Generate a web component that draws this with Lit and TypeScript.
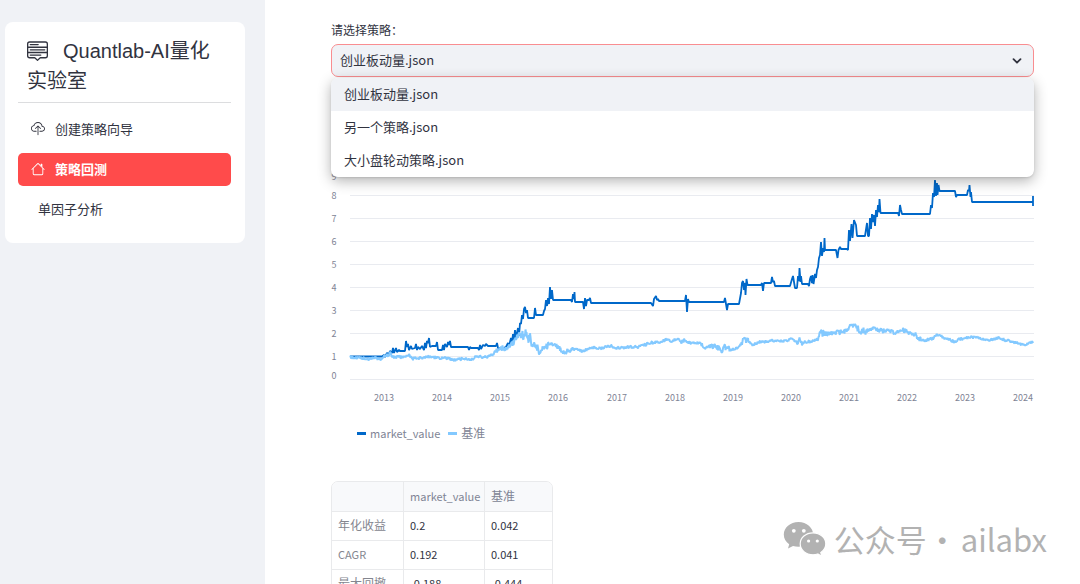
import { LitElement, html, svg, css, nothing } from "lit";
import { customElement, property, state } from "lit/decorators.js";
import { classMap } from "lit/directives/class-map.js";

const menuUpIcon = svg`<path d="M7.646 15.854a.5.5 0 0 0 .708 0L10.207 14H14a2 2 0 0 0 2-2V3a2 2 0 0 0-2-2H2a2 2 0 0 0-2 2v9a2 2 0 0 0 2 2h3.793l1.853 1.854zM1 9V6h14v3H1zm14 1v2a1 1 0 0 1-1 1h-3.793a1 1 0 0 0-.707.293l-1.5 1.5-1.5-1.5A1 1 0 0 0 5.793 13H2a1 1 0 0 1-1-1v-2h14zm0-5H1V3a1 1 0 0 1 1-1h12a1 1 0 0 1 1 1v2zM2 11.5a.5.5 0 0 0 .5.5h8a.5.5 0 0 0 0-1h-8a.5.5 0 0 0-.5.5zm0-4a.5.5 0 0 0 .5.5h11a.5.5 0 0 0 0-1h-11a.5.5 0 0 0-.5.5zm0-4a.5.5 0 0 0 .5.5h6a.5.5 0 0 0 0-1h-6a.5.5 0 0 0-.5.5z"/>`;
const cloudIcon = svg`<path d="M4.406 1.342A5.53 5.53 0 0 1 8 0c2.69 0 4.923 2 5.166 4.579C14.758 4.804 16 6.137 16 7.773 16 9.569 14.502 11 12.687 11H10a.5.5 0 0 1 0-1h2.688C13.979 10 15 8.988 15 7.773c0-1.216-1.02-2.228-2.313-2.228h-.5v-.5C12.188 2.825 10.328 1 8 1a4.53 4.53 0 0 0-2.941 1.1c-.757.652-1.153 1.438-1.153 2.055v.448l-.445.049C2.064 4.805 1 5.952 1 7.318 1 8.785 2.23 10 3.781 10H6a.5.5 0 0 1 0 1H3.781C1.708 11 0 9.366 0 7.318c0-1.763 1.266-3.223 2.942-3.593.143-.863.698-1.723 1.464-2.383z"/><path d="M7.646 4.146a.5.5 0 0 1 .708 0l3 3a.5.5 0 0 1-.708.708L8.5 5.707V14.5a.5.5 0 0 1-1 0V5.707L5.354 7.854a.5.5 0 1 1-.708-.708l3-3z"/>`;
const houseIcon = svg`<path d="M2 13.5V7h1v6.5a.5.5 0 0 0 .5.5h9a.5.5 0 0 0 .5-.5V7h1v6.5a1.5 1.5 0 0 1-1.5 1.5h-9A1.5 1.5 0 0 1 2 13.5zm11-11V6l-2-2V2.5a.5.5 0 0 1 .5-.5h1a.5.5 0 0 1 .5.5z"/><path d="M7.293 1.5a1 1 0 0 1 1.414 0l6.647 6.646a.5.5 0 0 1-.708.708L8 2.207 1.354 8.854a.5.5 0 1 1-.708-.708L7.293 1.5z"/>`;

const FONT = css`"Noto Sans CJK SC", "Noto Sans", sans-serif`;

@customElement("side-nav")
class SideNav extends LitElement {
  @state() active = 1;

  private items = [
    { label: "创建策略向导", icon: cloudIcon },
    { label: "策略回测", icon: houseIcon },
    { label: "单因子分析", icon: null },
  ];

  static styles = css`
    :host {
      display: block;
      background: #fff;
      border-radius: 8px;
      padding: 13px 14px 17px 13px;
      color: #31333f;
    }
    .title {
      margin: 0;
      padding: 1px 9px 6px;
      border-bottom: 1px solid #dcdddf;
      font: 400 20px/30px "Liberation Sans", ${FONT};
    }
    .title-icon {
      width: 21px;
      height: 21px;
      margin-right: 15px;
      vertical-align: -3px;
      fill: currentColor;
    }
    .list {
      list-style: none;
      margin: 10px 0 0;
      padding: 0;
      display: grid;
      gap: 7px;
    }
    .link {
      display: flex;
      align-items: center;
      gap: 10px;
      box-sizing: border-box;
      height: 33px;
      padding: 0 13px 2px;
      border-radius: 5px;
      color: inherit;
      text-decoration: none;
      font: 400 13px/20px ${FONT};
    }
    .plain {
      padding-left: 20px;
    }
    .active {
      background: #ff4b4b;
      color: #fff;
      font-weight: 700;
    }
    .icon {
      width: 14px;
      height: 14px;
      fill: currentColor;
    }
  `;

  render() {
    return html`
      <h1 class="title"><svg class="title-icon" viewBox="0 0 16 16" aria-hidden="true">${menuUpIcon}</svg>Quantlab-AI量化实验室</h1>
      <ul class="list">
        ${this.items.map(
          (item, i) => html`<li>
            <a
              href="#"
              class=${classMap({ link: true, active: i === this.active, plain: !item.icon })}
              @click=${(e: Event) => {
                e.preventDefault();
                this.active = i;
              }}
            >${item.icon
              ? html`<svg class="icon" viewBox="0 0 16 16" aria-hidden="true">${item.icon}</svg>`
              : nothing}${item.label}</a>
          </li>`
        )}
      </ul>
    `;
  }
}

@customElement("strategy-picker")
class StrategyPicker extends LitElement {
  @state() open = true;
  @state() value = "创业板动量.json";

  private options = ["创业板动量.json", "另一个策略.json", "大小盘轮动策略.json"];

  static styles = css`
    :host {
      display: block;
      color: #31333f;
    }
    .label {
      display: block;
      font: 400 12px/20px ${FONT};
      margin-bottom: 4px;
    }
    .box {
      position: relative;
    }
    .select {
      display: block;
      appearance: none;
      box-sizing: border-box;
      width: 100%;
      height: 33px;
      padding: 0 8px 2px;
      border: 1px solid #f98d90;
      border-radius: 7px;
      background: #f0f2f6;
      color: inherit;
      outline: none;
      font: 400 13px/20px ${FONT};
    }
    .chevron {
      position: absolute;
      right: 12px;
      top: 12px;
      width: 10px;
      height: 10px;
      fill: none;
      stroke: #31333f;
      stroke-width: 1.8;
      stroke-linecap: round;
      stroke-linejoin: round;
      pointer-events: none;
    }
    .menu {
      position: absolute;
      z-index: 2;
      top: 100%;
      left: 0;
      right: 0;
      margin: 1px 0 0;
      border-radius: 7px;
      overflow: hidden;
      background: #fff;
      box-shadow: 0 4px 14px rgba(0, 0, 0, 0.3), 0 1px 2px rgba(0, 0, 0, 0.1);
    }
    .option {
      display: block;
      width: 100%;
      height: 33px;
      border: 0;
      padding: 0 13px 2px;
      background: none;
      color: inherit;
      text-align: left;
      font: 400 13px/20px ${FONT};
    }
    .chosen {
      background: #f0f2f6;
    }
  `;

  private pick(value: string) {
    this.value = value;
    this.open = false;
  }

  render() {
    return html`
      <label class="label" for="strategy">请选择策略：</label>
      <div class="box">
        <select
          id="strategy"
          class="select"
          @mousedown=${(e: Event) => {
            e.preventDefault();
            this.open = !this.open;
          }}
          @change=${(e: Event) => this.pick((e.target as HTMLSelectElement).value)}
        >
          ${this.options.map((o) => html`<option value=${o} ?selected=${o === this.value}>${o}</option>`)}
        </select>
        <svg class="chevron" viewBox="0 0 10 10" aria-hidden="true"><path d="M1.500 3.200 5 6.700 8.500 3.200" /></svg>
        ${this.open
          ? html`<div class="menu" role="listbox" aria-label="策略">
              ${this.options.map(
                (o) => html`<button
                  type="button"
                  role="option"
                  aria-selected=${o === this.value}
                  class=${classMap({ option: true, chosen: o === this.value })}
                  @click=${() => this.pick(o)}
                >${o}</button>`
              )}
            </div>`
          : nothing}
      </div>
    `;
  }
}

/* Portfolio curve, in plot units: flat while in cash, jagged while invested. */
const MARKET = `350,356.500 382,356.500 384,355 385,357 387,353 389,354 390,351 392,353 393,348 394,353 396,348 397,352 399,350 400,351 405,351 406,341 407,347 408,344 409,350 411,346 412,349 415,348 416,344 417,350 418,347 420,349 422,346 424,350 425,343 426,348 427,341 428,343 429,338 430,347 432,346 436,346 437,342 438,350 442,350 443,345 444,350 445,344 447,347 448,342 449,345 450,341 451,347 468,347 469,350 470,347 471,348 478,348 479,350 480,345 481,349 483,345 485,346 486,344 488,346 496,346 497,343 498,348 503,348 506,347 508,343 509,346 511,338 512,343 513,334 514,340 515,330 516,338 518,328 519,336 520,323 521,324 522,315 523,319 524,309 525,307 526,313 527,310 528,318 534,318 535,308 536,315 543,315 544,311 545,309 546,300 547,306 548,298 549,304 550,287 551,299 552,290 553,300 571,300 572,302 573,294 574,299 574.500,292 575,302 583,302 584,309 585,298 586,306 587,300 589,300 590,298 591,303 651,303 653,306 654,299 656,296 657,300 658,299 659,301 685,301 686,295 687,312 688,299 689,302 724,302 725,298 726,304 727,310 728,304 739,304 741,293 742,283 743,281 744,290 745,283 745.500,295 746.500,279 747.500,285 761,285 762,283 763,291 764,283 771,283 772,277 773,282 774,281 775,286 790,286 792,279 793,276 794,282 795,288 797,288 798,276 799,281 799.500,268 800.500,282 801,276 802,284 808,284 809,286 810,279 811,276 812,283 812.500,275 813.500,284 815,274 816,278 817,270 818,267 819,258 820,255 821,242 822,256 823,248 824,252 824.500,238 825,250 836,250 837.500,258 838.500,250 840,247 841,249 847,249 848,250 849,230 850,241 851.500,224 852.500,238 854,220 856,225 857,236 865,236 867,223 868,236 869,236 870,218 871,229 872,214 873,222 874,215 875,226 876,210 877,217 878,205 879,212 879.500,199 880.500,213 898,213 899,216 900,205 901,210 902,214 930,214 931,205 932,208 933,193 934,197 935,180 936,196 937,183 937.500,195 938.500,185 939.500,191 955,191 956,197 957,195 967,195 968,190 969,191 969.500,185 970.500,197 971,192 972,202 1033,202 1033,196 1033,206`;

/* Benchmark trend: x, y and the daily jitter around it. */
const BENCHMARK: [number, number, number][] = [
  [350, 357, 1], [358, 358, 1], [370, 359, 1], [375, 358, 1], [380, 360, 1], [385, 356, 1], [390, 354, 2], [394, 357, 1],
  [405, 357, 1], [409, 355, 1], [412, 359, 1], [420, 358, 1], [428, 357, 1], [440, 358, 1], [448, 358, 1], [454, 360, 1],
  [460, 359, 1], [472, 359, 1], [477, 357, 1], [487, 357, 1], [494, 354, 1], [496, 350, 3], [500, 347, 3], [504, 348, 2],
  [508, 347, 3], [513, 342, 3], [519, 335, 5], [523, 336, 4], [526, 331, 2], [528, 340, 5], [530, 336, 3], [532, 346, 4],
  [536, 344, 5], [538, 352, 4], [541, 349, 2], [546, 347, 3], [549, 344, 1], [556, 345, 2], [559, 348, 2], [563, 352, 2],
  [570, 351, 2], [573, 349, 1], [582, 351, 1], [592, 348, 1], [602, 348, 1], [611, 346, 1], [616, 348, 1], [630, 347, 1],
  [638, 347, 1], [650, 343, 1], [660, 342, 1], [667, 339, 1], [672, 341, 1], [678, 338, 1], [681, 342, 2], [685, 340, 1],
  [690, 343, 1], [700, 343, 2], [704, 348, 1], [710, 346, 2], [717, 347, 2], [720, 350, 3], [726, 347, 2], [731, 350, 1],
  [739, 347, 1], [741, 342, 3], [748, 340, 2], [753, 344, 1], [760, 342, 1], [773, 341, 1], [786, 341, 1], [793, 338, 1],
  [796, 343, 2], [800, 339, 3], [803, 344, 2], [806, 342, 1], [813, 341, 1], [818, 339, 1], [820, 332, 3], [824, 334, 2],
  [833, 333, 2], [846, 331, 1], [850, 327, 2], [856, 325, 3], [859, 331, 3], [866, 331, 2], [873, 329, 2], [883, 331, 2],
  [896, 332, 1], [903, 330, 2], [910, 333, 2], [915, 334, 2], [918, 338, 2], [925, 341, 1], [932, 338, 2], [935, 335, 2],
  [942, 337, 1], [955, 342, 1], [960, 339, 1], [970, 337, 1], [980, 338, 1], [990, 340, 1], [998, 338, 1], [1010, 341, 1],
  [1018, 343, 1], [1025, 345, 1], [1034, 341, 1],
];

function jitteredLine(anchors: [number, number, number][]): string {
  let seed = 17;
  const random = () => {
    seed = (seed * 16807) % 2147483647;
    return seed / 2147483647 - 0.5;
  };
  const out: string[] = [];
  for (let i = 0; i < anchors.length - 1; i++) {
    const [x0, y0, a] = anchors[i];
    const [x1, y1] = anchors[i + 1];
    for (let x = x0; x < x1; x += 0.5) {
      const t = (x - x0) / (x1 - x0);
      out.push(`${x},${(y0 + (y1 - y0) * t + random() * (a + 0.5) * 2).toFixed(1)}`);
    }
  }
  return out.join(" ");
}

@customElement("value-chart")
class ValueChart extends LitElement {
  static styles = css`
    :host {
      display: block;
      font-family: ${FONT};
      color: #808495;
    }
    .plot {
      display: block;
      width: 100%;
    }
    .grid {
      stroke: #e9ebf0;
      stroke-width: 1;
    }
    .tick {
      font-size: 9px;
      fill: #808495;
      text-anchor: middle;
    }
    .line {
      fill: none;
      stroke-width: 1.8;
      stroke-linejoin: bevel;
    }
    .market {
      stroke: #0068c9;
    }
    .base {
      stroke: #83c9ff;
      stroke-width: 2;
    }
    .legend {
      display: flex;
      gap: 8px;
      margin-top: 13px;
      padding-left: 26px;
      font-size: 11px;
      line-height: 20px;
    }
    .key {
      display: flex;
      align-items: center;
      gap: 4px;
    }
    .cjk {
      font-size: 12px;
    }
    .swatch {
      width: 9px;
      height: 3px;
      background: #0068c9;
    }
    .swatch.light {
      background: #83c9ff;
    }
  `;

  render() {
    const y = (v: number) => 379.5 - 23 * v;
    const years = Array.from({ length: 12 }, (_, i) => 2013 + i);
    return html`
      <svg class="plot" viewBox="331 170 703 240" role="img" aria-label="market_value / 基准">
        ${[0, 1, 2, 3, 4, 5, 6, 7, 8, 9].map(
          (v) => svg`<line class="grid" x1="350" x2="1034" y1=${y(v)} y2=${y(v)} />
            <text class="tick" x="334" y=${y(v) + (v === 0 ? -1 : v === 9 ? 7 : 3)}>${v}</text>`
        )}
        ${years.map((n, i) => svg`<text class="tick" x=${384 + 58 * i + (i > 3 ? 1 : 0)} y="401">${n}</text>`)}
        <polyline class="line market" points=${MARKET} />
        <polyline class="line base" points=${jitteredLine(BENCHMARK)} />
      </svg>
      <div class="legend">
        <span class="key"><span class="swatch"></span>market_value</span>
        <span class="key cjk"><span class="swatch light"></span>基准</span>
      </div>
    `;
  }
}

@customElement("stats-table")
class StatsTable extends LitElement {
  @property({ attribute: false }) rows = [
    ["年化收益", "0.2", "0.042"],
    ["CAGR", "0.192", "0.041"],
    ["最大回撤", "-0.188", "-0.444"],
  ];

  static styles = css`
    :host {
      display: block;
      width: max-content;
      border: 1px solid #e9eaec;
      border-radius: 7px;
      overflow: hidden;
      color: #31333f;
    }
    .table {
      border-collapse: separate;
      border-spacing: 0;
      table-layout: fixed;
      width: 220px;
      font: 400 11px/20px ${FONT};
    }
    .first {
      width: 72px;
    }
    .second {
      width: 81px;
    }
    .cell {
      box-sizing: border-box;
      height: 29px;
      padding: 0 6px 2px;
      text-align: left;
      font-weight: 400;
      border-right: 1px solid #e9eaec;
      border-bottom: 1px solid #e9eaec;
    }
    .cell:last-child {
      border-right: 0;
    }
    .head {
      height: 30px;
      padding-bottom: 1px;
      background: #f8f9fb;
      color: #808495;
    }
    .index {
      color: #84868f;
    }
    .cjk {
      font-size: 12px;
    }
  `;

  render() {
    const cjk = (s: string) => /[\u4e00-\u9fff]/.test(s);
    return html`
      <table class="table">
        <colgroup><col class="first" /><col class="second" /><col /></colgroup>
        <thead>
          <tr>
            <td class="cell head"></td>
            <th class="cell head" scope="col">market_value</th>
            <th class="cell head cjk" scope="col">基准</th>
          </tr>
        </thead>
        <tbody>
          ${this.rows.map(
            ([name, a, b]) => html`<tr>
              <th class=${classMap({ cell: true, index: true, cjk: cjk(name) })} scope="row">${name}</th>
              <td class="cell">${a}</td>
              <td class="cell">${b}</td>
            </tr>`
          )}
        </tbody>
      </table>
    `;
  }
}

@customElement("app-root")
class AppRoot extends LitElement {
  static styles = css`
    :host {
      display: flex;
      height: 100vh;
      overflow: hidden;
      position: relative;
      background: #fff;
      font-family: ${FONT};
    }
    .sidebar {
      flex: 0 0 240px;
      padding: 22px 20px 0 5px;
      background: #f0f2f6;
    }
    .main {
      flex: 1;
      min-width: 0;
      padding: 20px 46px 0 66px;
      overflow: hidden;
    }
    .chart {
      margin-top: 93px;
    }
    .stats {
      margin-top: 38px;
    }
    .badge {
      position: absolute;
      right: 33px;
      bottom: 23px;
      display: flex;
      align-items: center;
      color: #b2b2b2;
      font-size: 31px;
      line-height: 44px;
      white-space: nowrap;
    }
    .bubbles {
      width: 43px;
      height: 36px;
      margin-right: 8px;
    }
    .account {
      margin-left: 3px;
    }
  `;

  render() {
    return html`
      <aside class="sidebar"><side-nav></side-nav></aside>
      <main class="main">
        <strategy-picker></strategy-picker>
        <value-chart class="chart"></value-chart>
        <stats-table class="stats"></stats-table>
      </main>
      <div class="badge">
        <svg class="bubbles" viewBox="0 0 43 36" aria-hidden="true">
          <path fill="#b2b2b2" d="M15.500 1C7.200 1 .8 6.600.8 13.600c0 4 2 7.400 5.400 9.700L5 27.500l5-2.600c1.700.5 3.600.8 5.500.8 8.200 0 14.700-5.400 14.700-12.100S23.700 1 15.500 1z" />
          <path fill="#b2b2b2" stroke="#fff" stroke-width="1.200" d="M30 11.800c-7.200 0-12.800 4.900-12.800 11s5.600 11 12.800 11c1.700 0 3.300-.3 4.800-.8l4 2.200-1-3.700c3.100-2 5-5.200 5-8.700 0-6.100-5.700-11-12.800-11z" />
          <g fill="#fff"><circle cx="10.800" cy="9.800" r="1.900" /><circle cx="20.800" cy="9.800" r="1.900" /><circle cx="25.600" cy="20" r="1.600" /><circle cx="34.300" cy="20" r="1.600" /></g>
        </svg>
        <span>公众号·</span><span class="account">ailabx</span>
      </div>
    `;
  }
}
